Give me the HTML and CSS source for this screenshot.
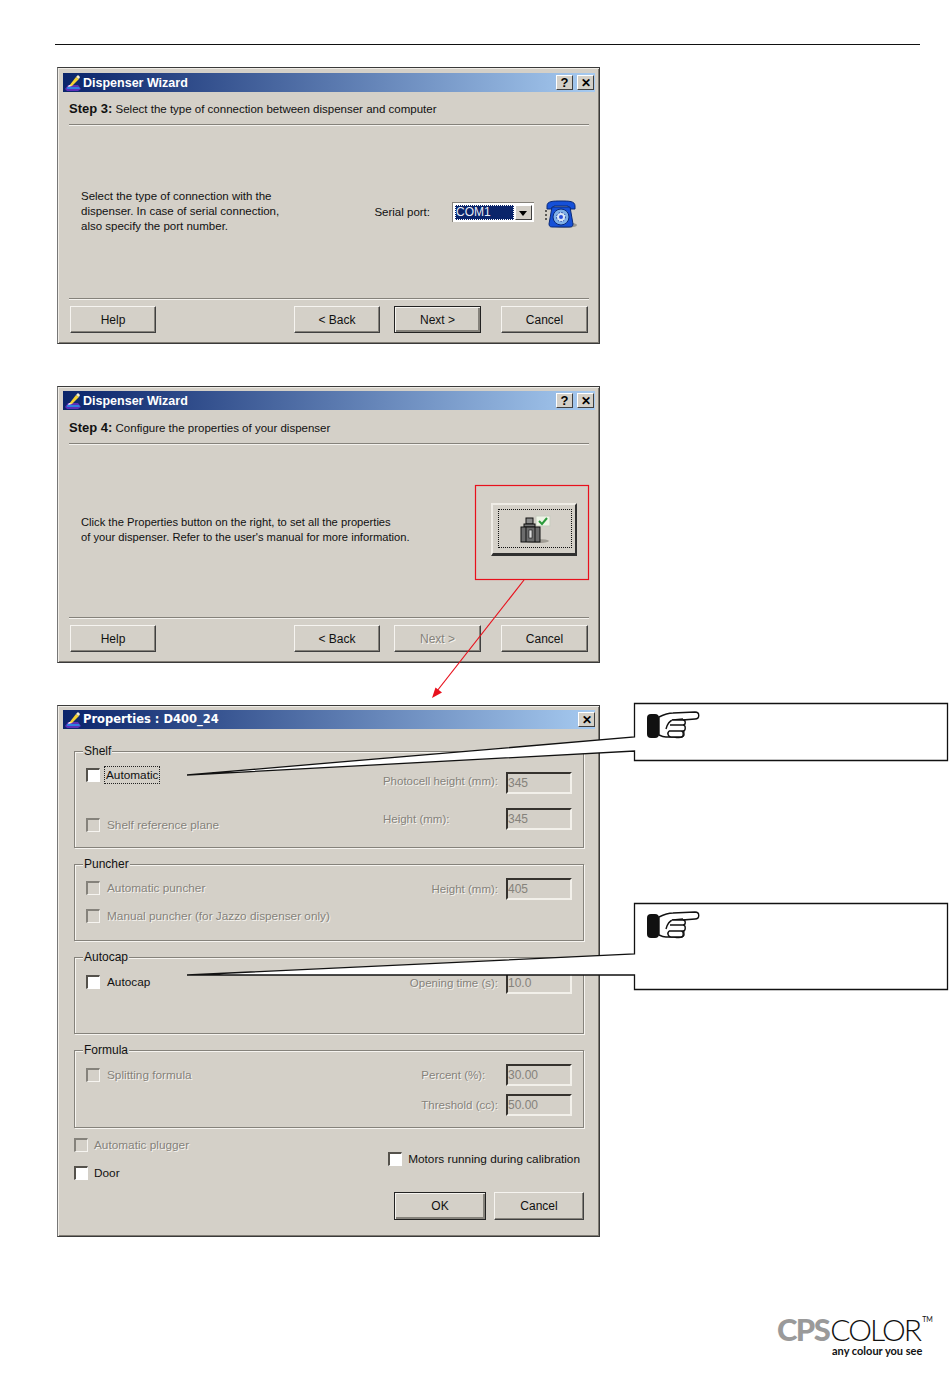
FILE: index.html
```html
<!DOCTYPE html>
<html lang="en">
<head>
<meta charset="utf-8">
<title>Dispenser Wizard</title>
<link rel="stylesheet" href="styles.css">
</head>
<body>
<svg class="defs" width="0" height="0" aria-hidden="true">
  <symbol id="app-icon" viewBox="0 0 18 18">
    <path d="M1 15 L4 11 L14 11 L17 15 L14 17 L3 17 Z" fill="#5b2fb8"/>
    <path d="M3 13 L15 13 L16 15 L3 15 Z" fill="#2f7fe0"/>
    <path d="M5 12 L12 3 L15 5 L8 12 Z" fill="#f4d232"/>
    <path d="M12 3 L14 1 L16 3 L15 5 Z" fill="#f6f0d0"/>
    <path d="M4 13 L5 11 L8 12 Z" fill="#fff"/>
  </symbol>
  <symbol id="hand" viewBox="0 0 54 28">
    <rect x="1" y="3" width="12" height="24" rx="4" fill="#111"/>
    <path d="M13 6 C17 4 21 2 27 2 L49 1 C54 1 54 8 49 8 L37 9 L38 24 C37 27 33 27 28 26 L20 26 C17 26 15 25 13 24 Z" fill="#fff" stroke="#111" stroke-width="1.4"/>
    <path d="M27 9 C23 10 21 14 20 18 M37 8 L27 9" fill="none" stroke="#111" stroke-width="1.4"/>
    <path d="M26 9 L37 9 C40 9 40 14 37 14 L25 14 M24 14 L37 14 C40 14 40 20 37 20 L23 20 M23 20 L35 20 C38 20 38 26 35 26 L25 26 C22 26 21 22 23 20" fill="#fff" stroke="#111" stroke-width="1.4"/>
  </symbol>
</svg>

<div class="page">
  <div class="rule"></div>

  <main class="stack">
    <section class="dialog wizard">
      <header class="titlebar">
        <svg class="app-icon"><use href="#app-icon"/></svg>
        <span class="title">Dispenser Wizard</span>
        <span class="cap-btn help-cap">?</span>
        <span class="cap-btn">&#10005;</span>
      </header>
      <div class="wizard-body">
        <p class="step"><b>Step 3:</b> Select the type of connection between dispenser and computer</p>
        <div class="etch"></div>
        <div class="content">
          <p class="desc desc-raised">Select the type of connection with the<br>dispenser. In case of serial connection,<br>also specify the port number.</p>
          <span class="port-label">Serial port:</span>
          <div class="combo">
            <span class="combo-value">COM1</span>
            <span class="combo-arrow"></span>
          </div>
          <svg class="phone" viewBox="0 0 32 28" aria-hidden="true">
            <ellipse cx="19" cy="25" rx="13" ry="3" fill="#9a9890"/>
            <path d="M2 6 C2 1 8 1 16 1 C24 1 30 1 30 6 L30 9 L24 9 L23 6 L9 6 L8 9 L2 9 Z" fill="#1550d8" stroke="#0a2a78"/>
            <path d="M7 7 L25 7 L28 24 C28 27 26 27 24 27 L8 27 C6 27 4 27 4 24 Z" fill="#1550d8" stroke="#0a2a78"/>
            <circle cx="16" cy="17" r="8" fill="#7fb0e8" stroke="#0a2a78"/>
            <circle cx="16" cy="17" r="4.5" fill="#d8e6f6" stroke="#1a3fa0" stroke-dasharray="1.5 1.5"/>
            <circle cx="16" cy="17" r="2" fill="#2a4fd8"/>
            <path d="M1 10 L1 22" stroke="#333" stroke-dasharray="2 2" stroke-width="1.5"/>
          </svg>
        </div>
        <div class="etch"></div>
        <div class="actions">
          <span class="btn">Help</span>
          <span class="spacer"></span>
          <span class="btn">&lt; Back</span>
          <span class="btn default">Next &gt;</span>
          <span class="btn">Cancel</span>
        </div>
      </div>
    </section>

    <section class="dialog wizard wizard-tight">
      <header class="titlebar">
        <svg class="app-icon"><use href="#app-icon"/></svg>
        <span class="title">Dispenser Wizard</span>
        <span class="cap-btn help-cap">?</span>
        <span class="cap-btn">&#10005;</span>
      </header>
      <div class="wizard-body">
        <p class="step"><b>Step 4:</b> Configure the properties of your dispenser</p>
        <div class="etch"></div>
        <div class="content content-props">
          <p class="desc desc-narrow">Click the Properties button on the right, to set all the properties<br>of your dispenser. Refer to the user's manual for more information.</p>
          <div class="props-btn">
            <div class="props-focus">
              <svg class="props-icon" viewBox="0 0 34 30" aria-hidden="true">
                <ellipse cx="17" cy="27" rx="12" ry="2" fill="#a09c94"/>
                <rect x="16" y="2" width="14" height="10" fill="#eef4e6" stroke="#c8ccc0"/>
                <path d="M19 7 L22 10 L27 4" fill="none" stroke="#2a9a3a" stroke-width="2"/>
                <rect x="6" y="4" width="7" height="6" fill="#8a8a8a" stroke="#111"/>
                <rect x="4" y="10" width="11" height="3" fill="#777" stroke="#111"/>
                <rect x="1" y="13" width="19" height="15" fill="#6c6c6c" stroke="#111"/>
                <path d="M6 13 L6 28 M15 13 L15 28" stroke="#111"/>
                <rect x="9" y="16" width="3" height="8" fill="#ddd" stroke="#111" stroke-width=".6"/>
              </svg>
            </div>
          </div>
        </div>
        <div class="etch"></div>
        <div class="actions">
          <span class="btn">Help</span>
          <span class="spacer"></span>
          <span class="btn">&lt; Back</span>
          <span class="btn next-off off">Next &gt;</span>
          <span class="btn">Cancel</span>
        </div>
      </div>
    </section>

    <section class="dialog properties">
      <header class="titlebar titlebar-props">
        <svg class="app-icon"><use href="#app-icon"/></svg>
        <span class="title title-props">Properties : D400_24</span>
        <span class="cap-btn">&#10005;</span>
      </header>
      <div class="props-body">
        <fieldset class="group shelf">
          <span class="legend">Shelf</span>
          <div class="checks">
            <label class="check"><i class="box"></i><span class="focus">Automatic</span></label>
            <label class="check off"><i class="box"></i>Shelf reference plane</label>
          </div>
          <div class="fields">
            <span class="off">Photocell height (mm):</span><span class="input">345</span>
            <span class="off">Height (mm):</span><span class="input">345</span>
          </div>
        </fieldset>

        <fieldset class="group puncher">
          <span class="legend">Puncher</span>
          <div class="checks">
            <label class="check off"><i class="box"></i>Automatic puncher</label>
            <label class="check off"><i class="box"></i>Manual puncher (for Jazzo dispenser only)</label>
          </div>
          <div class="fields">
            <span class="off">Height (mm):</span><span class="input">405</span>
          </div>
        </fieldset>

        <fieldset class="group autocap">
          <span class="legend">Autocap</span>
          <div class="checks">
            <label class="check"><i class="box"></i>Autocap</label>
          </div>
          <div class="fields">
            <span class="off">Opening time (s):</span><span class="input">10.0</span>
          </div>
        </fieldset>

        <fieldset class="group formula">
          <span class="legend">Formula</span>
          <div class="checks">
            <label class="check off"><i class="box"></i>Splitting formula</label>
          </div>
          <div class="fields">
            <span class="off">Percent (%):</span><span class="input">30.00</span>
            <span class="off">Threshold (cc):</span><span class="input">50.00</span>
          </div>
        </fieldset>

        <div class="bottom">
          <div class="bottom-left">
            <label class="check off"><i class="box"></i>Automatic plugger</label>
            <label class="check"><i class="box"></i>Door</label>
          </div>
          <div class="bottom-right">
            <label class="check motors"><i class="box"></i>Motors running during calibration</label>
            <div class="ok-row">
              <span class="btn default ok">OK</span>
              <span class="btn cancel-props">Cancel</span>
            </div>
          </div>
        </div>
      </div>
    </section>
  </main>

  <footer class="logo">
    <div class="logo-mark"><span class="cps">CPS</span><span class="color">COLOR</span><span class="tm">TM</span></div>
    <div class="tagline">any colour you see</div>
  </footer>

  <svg class="overlay" viewBox="0 0 950 1379" aria-hidden="true">
    <rect x="475.5" y="485.5" width="113" height="94" fill="none" stroke="#e8101c" stroke-width="1.2"/>
    <path d="M524 580 L437 691" stroke="#e8101c" fill="none" stroke-width="1.2"/>
    <path d="M432 698 L435.5 687.5 L442 692.5 Z" fill="#e8101c"/>
    <path d="M634.5 737 L634.5 703.5 L947.5 703.5 L947.5 760.5 L634.5 760.5 L634.5 751 L187 775 Z" fill="#fff" stroke="#111" stroke-width="1.3"/>
    <path d="M634.5 954 L634.5 903.5 L947.5 903.5 L947.5 989.5 L634.5 989.5 L634.5 975 L187 975 Z" fill="#fff" stroke="#111" stroke-width="1.3"/>
    <use href="#hand" x="646" y="711" width="54" height="28"/>
    <use href="#hand" x="646" y="911" width="54" height="28"/>
  </svg>
</div>
</body>
</html>
```
FILE: styles.css
```css
* { box-sizing: border-box; }

html, body { margin: 0; padding: 0; background: #fff; }

body {
  font-family: "Liberation Sans", Arial, sans-serif;
  font-size: 12px;
  line-height: 14px;
  color: #111;
}

.defs { position: absolute; }

.page {
  position: relative;
  width: 950px;
  height: 1379px;
  padding-top: 44px;
  overflow: hidden;
}

.rule {
  margin: 0 30px 0 55px;
  height: 1px;
  background: #111;
}

.stack {
  display: flex;
  flex-direction: column;
  gap: 42px;
  width: 543px;
  margin: 22px 0 0 57px;
}

/* Window chrome */
.dialog {
  display: flex;
  flex-direction: column;
  padding: 5px 4px 0 5px;
  background: #d4d0c8;
  border: 1px solid #3a3a3a;
  border-left-color: #777;
  box-shadow: inset 1px 1px 0 #efece6, inset -1px -1px 0 #807c74;
}

.wizard { height: 277px; }
.wizard-tight { padding-top: 4px; }
.wizard-tight .wizard-body { padding-top: 11px; }
.properties { height: 532px; padding-top: 4px; }

.titlebar {
  display: flex;
  align-items: center;
  flex: none;
  height: 19px;
  padding: 0 1px;
  gap: 4px;
  background: linear-gradient(90deg, #0a246a, #a6caf0);
  color: #fff;
}

.titlebar-props { padding-right: 0; }

.app-icon { width: 18px; height: 18px; flex: none; margin-right: -3px; }

.title {
  flex: 1;
  font-size: 12.5px;
  font-weight: 700;
  white-space: nowrap;
}

.title-props {
  font-family: "DejaVu Sans", sans-serif;
  font-size: 11.5px;
  line-height: 12px;
  margin-bottom: 2px;
}

.cap-btn {
  display: flex;
  align-items: center;
  justify-content: center;
  width: 17px;
  height: 15px;
  background: #d4d0c8;
  color: #000;
  font-size: 12px;
  font-weight: 700;
  border: 1px solid;
  border-color: #fff #404040 #404040 #fff;
}

.help-cap { font-size: 13px; }

/* Wizard body */
.wizard-body {
  display: flex;
  flex-direction: column;
  flex: 1;
  padding: 10px 6px 10px;
}

.step { margin: 0 0 8px; font-size: 11.5px; white-space: nowrap; }
.step b { font-size: 13px; font-weight: 700; }

.etch {
  flex: none;
  height: 2px;
  background: #85827b;
  border-bottom: 1px solid #f4f2ee;
}

.content {
  flex: 1;
  display: flex;
  align-items: center;
  padding: 0 12px;
  font-size: 11.5px;
}

.content-props { padding-bottom: 3px; }

.desc { margin: 0; line-height: 15px; flex: 1; white-space: nowrap; }
.desc-raised { margin-bottom: 2px; }
.desc-narrow { font-size: 11.2px; }

.port-label { margin-right: 22px; }

.combo {
  display: flex;
  align-items: stretch;
  width: 82px;
  height: 20px;
  padding: 2px;
  font-size: 12px;
  background: #fff;
  border: 1px solid #85827b;
  border-width: 1px 0 0 1px;
}

.combo-value {
  flex: 1;
  padding-left: 1px;
  line-height: 14px;
  background: #0a246a;
  color: #e8ecf6;
  outline: 1px dotted #fff;
  outline-offset: -1px;
}

.combo-arrow {
  position: relative;
  width: 17px;
  margin-left: 1px;
  background: #d4d0c8;
  border: 1px solid;
  border-color: #fff #404040 #404040 #fff;
}

.combo-arrow::after {
  content: "";
  position: absolute;
  left: 3px;
  top: 5px;
  border: 4px solid transparent;
  border-top: 5px solid #000;
  border-bottom: 0;
}

.phone { width: 32px; height: 28px; margin-left: 11px; flex: none; position: relative; top: 2px; }

.props-btn {
  display: flex;
  width: 86px;
  height: 53px;
  padding: 4px 3px 5px 5px;
  background: #d4d0c8;
  border: 1px solid #1c1c1c;
  border-color: #efece6 #303030 #303030 #efece6;
  border-width: 2px 2px 3px 2px;
}

.props-focus {
  flex: 1;
  display: flex;
  align-items: center;
  justify-content: center;
  border: 1px dotted #111;
}

.props-icon { width: 34px; height: 30px; margin-left: 4px; }

.actions {
  display: flex;
  flex: none;
  gap: 14px;
  margin-top: 6px;
  padding: 0 1px;
}

.actions .btn:last-child { width: 87px; margin-left: 6px; }

.spacer { flex: 1; }

.btn {
  display: flex;
  align-items: center;
  justify-content: center;
  width: 86px;
  height: 27px;
  background: #d4d0c8;
  border: 1px solid;
  border-color: #f6f4f0 #404040 #404040 #f6f4f0;
  box-shadow: inset -1px -1px 0 #85827b;
}

.btn.default {
  width: 87px;
  border-color: #222;
  box-shadow: inset 1px 1px 0 #f6f4f0, inset -2px -2px 0 #85827b;
}

.next-off { width: 87px; border-color: #f6f4f0 #404040 #404040 #f6f4f0; }

.off {
  color: #85827b;
  text-shadow: 1px 1px 0 #f6f4f0;
}

/* Properties */
.props-body {
  display: flex;
  flex-direction: column;
  flex: 1;
  gap: 16px;
  padding: 22px 11px 0 11px;
}

.group {
  position: relative;
  display: flex;
  justify-content: space-between;
  align-items: flex-start;
  flex: none;
  margin: 0;
  padding: 0 11px 0 11px;
  min-width: 0;
  border: 1px solid #85827b;
  box-shadow: 1px 1px 0 #f6f4f0, inset 1px 1px 0 #f6f4f0;
}

.legend {
  position: absolute;
  top: -8px;
  left: 8px;
  padding: 0 1px;
  background: #d4d0c8;
}

.shelf { height: 97px; }
.puncher { height: 77px; }
.autocap { height: 77px; }
.formula { height: 78px; }

.checks { display: flex; flex-direction: column; align-items: flex-start; }

.shelf .checks { padding-top: 16px; gap: 36px; }
.puncher .checks { padding-top: 16px; gap: 14px; }
.autocap .checks { padding-top: 17px; }
.formula .checks { padding-top: 17px; }

.check {
  display: flex;
  align-items: center;
  gap: 6px;
  height: 14px;
  font-size: 11.8px;
  white-space: nowrap;
}

.group .check { gap: 7px; }

.box {
  flex: none;
  width: 14px;
  height: 14px;
  background: #fff;
  border-style: solid;
  border-width: 2px 1px 1px 2px;
  border-color: #55524c #fff #fff #55524c;
}

.check.off .box { background: #d4d0c8; border-color: #85827b #f6f4f0 #f6f4f0 #85827b; }

.focus {
  margin-left: -3px;
  padding: 2px;
  outline: 1px dotted #222;
  outline-offset: -1px;
}

.fields {
  display: grid;
  grid-template-columns: auto 66px;
  column-gap: 8px;
  align-items: center;
  font-size: 11.5px;
}

.shelf .fields { padding-top: 20px; row-gap: 14px; }
.shelf .fields span:first-child { margin-bottom: 4px; }
.puncher .fields { padding-top: 13px; }
.autocap .fields { padding-top: 14px; }
.formula .fields { padding-top: 13px; row-gap: 8px; }

.input {
  height: 22px;
  padding: 2px 0 0;
  font-size: 12px;
  color: #85827b;
  background: #d4d0c8;
  border-style: solid;
  border-width: 2px;
  border-color: #35322e #f2f0ea #f2f0ea #35322e;
}

.bottom {
  display: flex;
  justify-content: space-between;
  margin-top: -6px;
}

.bottom-left { display: flex; flex-direction: column; gap: 14px; }

.bottom-right {
  display: flex;
  flex-direction: column;
  align-items: flex-end;
  padding-top: 14px;
}

.motors { margin-right: 4px; }

.ok-row { display: flex; gap: 8px; margin-top: 26px; }

.btn.ok { width: 92px; height: 28px; }
.cancel-props { width: 90px; height: 28px; }

/* Logo */
.logo {
  width: 160px;
  margin: 78px 0 0 777px;
}

.logo-mark {
  display: flex;
  align-items: flex-start;
  font-family: Lato, "Liberation Sans", sans-serif;
  font-size: 31px;
  line-height: 28px;
  color: #111;
}

.cps { font-weight: 900; color: #9a9a9a; letter-spacing: -1.6px; }
.color { font-weight: 300; font-size: 30px; letter-spacing: -1.9px; margin-left: 1px; }
.tm { font-size: 7px; line-height: 8px; margin-left: 2px; }

.tagline {
  margin-top: 2px;
  padding-left: 55px;
  font-family: Lato, "Liberation Sans", sans-serif;
  font-size: 11px;
  font-weight: 700;
  line-height: 12px;
  white-space: nowrap;
}

/* Annotations drawn over the screenshots */
.overlay {
  position: absolute;
  left: 0;
  top: 0;
  width: 950px;
  height: 1379px;
  pointer-events: none;
}
```
